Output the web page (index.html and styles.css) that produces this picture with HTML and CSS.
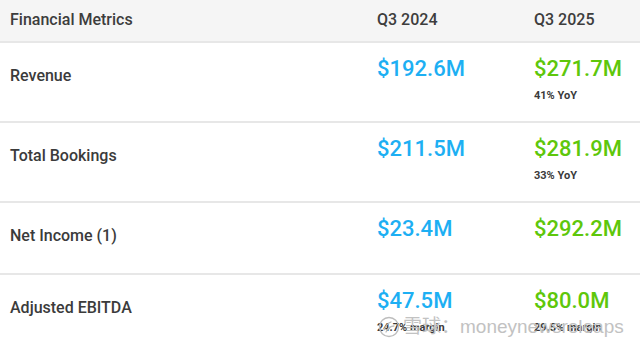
FILE: index.html
```html
<!DOCTYPE html>
<html lang="en">
<head>
<meta charset="utf-8">
<title>Financial Metrics</title>
<link rel="stylesheet" href="styles.css">
</head>
<body>
<div class="table">
  <div class="row head">
    <div class="label">Financial Metrics</div>
    <div class="col">Q3 2024</div>
    <div class="col">Q3 2025</div>
  </div>
  <div class="row">
    <div class="label">Revenue</div>
    <div class="cell"><div class="val blue">$192.6M</div></div>
    <div class="cell"><div class="val green">$271.7M</div><div class="sub">41% YoY</div></div>
  </div>
  <div class="row">
    <div class="label">Total Bookings</div>
    <div class="cell"><div class="val blue">$211.5M</div></div>
    <div class="cell"><div class="val green">$281.9M</div><div class="sub">33% YoY</div></div>
  </div>
  <div class="row">
    <div class="label">Net Income (1)</div>
    <div class="cell"><div class="val blue">$23.4M</div></div>
    <div class="cell"><div class="val green">$292.2M</div></div>
  </div>
  <div class="row">
    <div class="label">Adjusted EBITDA</div>
    <div class="cell"><div class="val blue">$47.5M</div><div class="sub">24.7% margin</div></div>
    <div class="cell"><div class="val green">$80.0M</div><div class="sub">29.5% margin</div></div>
  </div>
</div>
<div class="watermark">
  <svg class="wm-logo" width="22" height="22" viewBox="0 0 22 22" aria-hidden="true">
    <circle cx="11" cy="11" r="9.5" fill="none" stroke="#bdbdbd" stroke-width="1.3"/>
    <path d="M6 14 C8 9, 10 7, 13 6 M8 16 C10 12, 13 10, 16 10" fill="none" stroke="#bdbdbd" stroke-width="1.3" stroke-linecap="round"/>
  </svg>
  <span class="wm-text">雪球：moneynewsreleaps</span>
</div>
</body>
</html>
```
FILE: styles.css
```css
html, body {
  margin: 0;
  padding: 0;
  background: #ffffff;
}
body {
  font-family: Roboto, "Liberation Sans", sans-serif;
  color: #3b3b3b;
  width: 640px;
  height: 345px;
  overflow: hidden;
  position: relative;
}
.table {
  display: flex;
  flex-direction: column;
}
.row {
  display: grid;
  grid-template-columns: 367px 157px 1fr;
  padding: 12px 0 18px 10px;
  border-bottom: 2px solid #e7e7e7;
}
.row.head {
  background: #f5f5f5;
  padding: 10px 0 11px 10px;
}
.head .label, .head .col {
  font-size: 16px;
  line-height: 20px;
  font-weight: 500;
  color: #3d3d3d;
  margin: 0;
}
.label {
  font-size: 16px;
  line-height: 20px;
  font-weight: 500;
  color: #3b3b3b;
  margin-top: 11px;
}
.cell {
  min-height: 40px;
}
.val {
  font-size: 22px;
  line-height: 28px;
  font-weight: 500;
}
.blue { color: #1daff3; }
.green { color: #5ec70b; }
.sub {
  margin-top: 6px;
  font-size: 11px;
  line-height: 14px;
  font-weight: 700;
  color: #3a3a3a;
}
.watermark {
  position: absolute;
  left: 378px;
  top: 316px;
  display: flex;
  align-items: center;
  gap: 3px;
}
.wm-text {
  font-family: "Liberation Sans", "Noto Sans CJK SC", sans-serif;
  font-size: 19px;
  line-height: 22px;
  color: #c2c2c2;
  font-weight: 400;
}
```
